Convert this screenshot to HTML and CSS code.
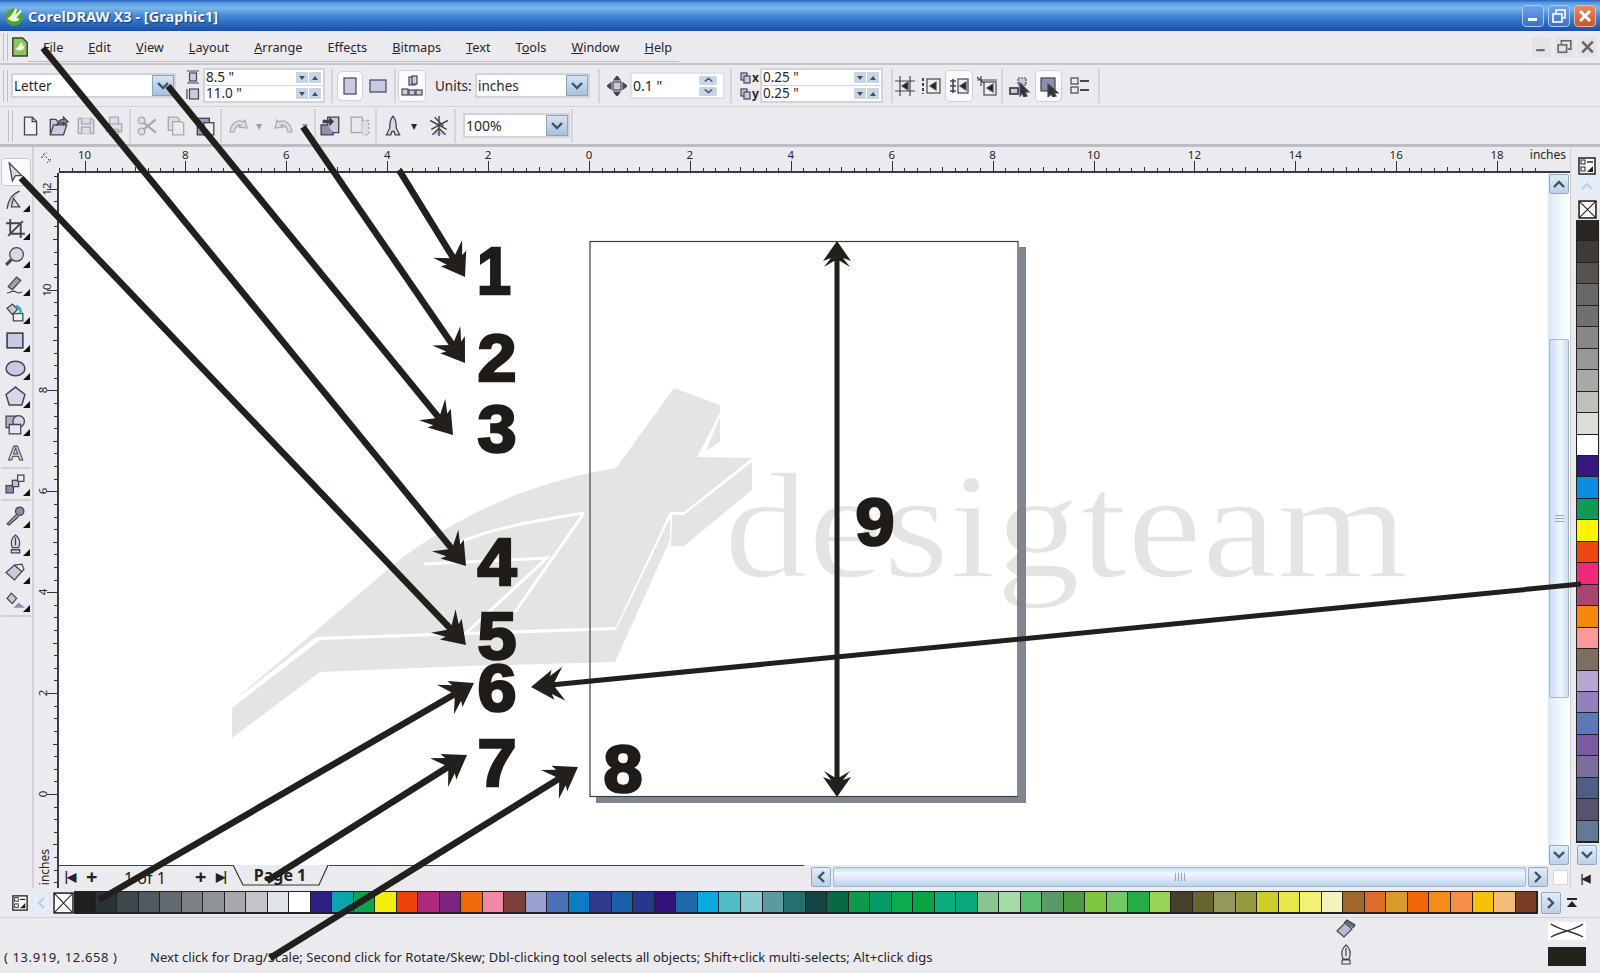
FILE: index.html
```html
<!DOCTYPE html>
<html lang="en">
<head>
    <meta charset="UTF-8">
    <title>CorelDRAW X3 - [Graphic1]</title>
    <link rel="stylesheet" href="styles.css">
</head>
<body>
<div class="app">

    <!-- Title bar -->
    <header class="titlebar">
        <svg class="app-logo" viewBox="0 0 20 20"><circle cx="10" cy="11" r="8" fill="#4fa52c"/><path d="M4 12c3-1 5-4 7-9l2 1-2 5 5-5 1 2-5 6 3 0-1 2c-3 2-7 1-10-2z" fill="#eef5dc"/></svg>
        <span class="title-text">CorelDRAW X3 - [Graphic1]</span>
        <div class="win-btns">
            <button class="win-btn"><svg viewBox="0 0 20 20"><rect x="5" y="12" width="9" height="3" fill="#fff"/></svg></button>
            <button class="win-btn"><svg viewBox="0 0 20 20" fill="none" stroke="#fff" stroke-width="1.6"><rect x="4" y="8" width="9" height="8"/><path d="M7 7V4h9v8h-3"/></svg></button>
            <button class="win-btn win-close"><svg viewBox="0 0 20 20" stroke="#fff" stroke-width="3"><path d="M5 5l10 10M15 5L5 15"/></svg></button>
        </div>
    </header>

    <!-- Menu bar -->
    <nav class="menubar">
        <span class="grip"></span>
        <svg class="doc-logo" viewBox="0 0 20 24"><path d="M2 2h11l5 5v15H2z" fill="#8fc65a" stroke="#3b3f33" stroke-width="1.6"/><path d="M5 14c3-1 4-4 6-7l2 1-1 3 3-1-1 4c-3 3-7 2-9 0z" fill="#f4f8e6"/></svg>
        <div class="menu-items">
            <a class="menu-item"><u>F</u>ile</a>
            <a class="menu-item"><u>E</u>dit</a>
            <a class="menu-item"><u>V</u>iew</a>
            <a class="menu-item"><u>L</u>ayout</a>
            <a class="menu-item"><u>A</u>rrange</a>
            <a class="menu-item">Effe<u>c</u>ts</a>
            <a class="menu-item"><u>B</u>itmaps</a>
            <a class="menu-item"><u>T</u>ext</a>
            <a class="menu-item">T<u>o</u>ols</a>
            <a class="menu-item"><u>W</u>indow</a>
            <a class="menu-item"><u>H</u>elp</a>
        </div>
        <div class="mdi-btns">
            <button class="mdi-btn"><svg viewBox="0 0 18 18"><rect x="4" y="11" width="8" height="2" fill="#666"/></svg></button>
            <button class="mdi-btn"><svg viewBox="0 0 18 18" fill="none" stroke="#666" stroke-width="1.5"><rect x="3" y="7" width="8" height="7"/><path d="M6 6V3h9v8h-3"/></svg></button>
            <button class="mdi-btn"><svg viewBox="0 0 18 18" stroke="#666" stroke-width="2.4"><path d="M4 4l10 10M14 4L4 14"/></svg></button>
        </div>
    </nav>

    <!-- Property bar -->
    <div class="propbar">
        <span class="grip"></span>
        <div class="combo combo-paper"><span>Letter</span><span class="drop"><svg viewBox="0 0 12 8"><path d="M1 1l5 5 5-5" fill="none" stroke="#3e5168" stroke-width="2.4"/></svg></span></div>
        <div class="dim-icons">
            <svg class="ic small" viewBox="0 0 14 14"><path d="M1 1h12M1 13h12"/><rect x="3.5" y="3" width="7" height="8"/></svg>
            <svg class="ic small" viewBox="0 0 14 14"><path d="M1 2v10"/><rect x="3.5" y="2" width="9" height="10"/></svg>
        </div>
        <div class="spin-pair w-size">
            <div class="spin-row"><span>8.5 "</span><i class="mini down"></i><i class="mini up"></i></div>
            <div class="spin-row"><span>11.0 "</span><i class="mini down"></i><i class="mini up"></i></div>
        </div>
        <span class="sep s-size"></span>
        <button class="tb-btn on portrait"><svg class="ic" viewBox="0 0 20 20"><rect x="4" y="2" width="12" height="16"/></svg></button>
        <button class="tb-btn landscape"><svg class="ic" viewBox="0 0 20 20"><rect x="2" y="4" width="16" height="12"/></svg></button>
        <span class="sep s-orient"></span>
        <button class="tb-btn on layoutbtn"><svg class="ic" viewBox="0 0 24 24"><rect x="9" y="3" width="6" height="8"/><rect x="12" y="2" width="5" height="8"/><rect x="2" y="15" width="6" height="6"/><rect x="9" y="16" width="6" height="5"/><rect x="16" y="16" width="6" height="5"/></svg></button>
        <span class="units-label">Units:</span>
        <div class="combo combo-units"><span>inches</span><span class="drop"><svg viewBox="0 0 12 8"><path d="M1 1l5 5 5-5" fill="none" stroke="#3e5168" stroke-width="2.4"/></svg></span></div>
        <span class="sep s-units"></span>
        <svg class="ic nudge" viewBox="0 0 20 20"><rect x="6" y="6" width="8" height="8"/><path d="M10 0l3 4H7zM10 20l3-4H7zM0 10l4-3v6zM20 10l-4-3v6z" fill="#444"/></svg>
        <div class="nudge-field"><span>0.1 "</span><div class="nudge-spin"><i><svg viewBox="0 0 12 8"><path d="M1 6l5-4 5 4" fill="none" stroke="#3e5168" stroke-width="2"/></svg></i><i><svg viewBox="0 0 12 8"><path d="M1 2l5 4 5-4" fill="none" stroke="#3e5168" stroke-width="2"/></svg></i></div></div>
        <span class="sep s-nudge"></span>
        <div class="dup-icons">
            <div class="dup-row"><svg class="ic tiny" viewBox="0 0 12 12"><rect x="1" y="1" width="6" height="7"/><rect x="4" y="4" width="6" height="7"/></svg><b>x</b></div>
            <div class="dup-row"><svg class="ic tiny" viewBox="0 0 12 12"><rect x="1" y="1" width="6" height="7"/><rect x="4" y="4" width="6" height="7"/></svg><b>y</b></div>
        </div>
        <div class="spin-pair w-dup">
            <div class="spin-row"><span>0.25 "</span><i class="mini down"></i><i class="mini up"></i></div>
            <div class="spin-row"><span>0.25 "</span><i class="mini down"></i><i class="mini up"></i></div>
        </div>
        <span class="sep s-dup"></span>
        <button class="tb-btn snap1"><svg class="ic" viewBox="0 0 22 22"><path d="M1 6h20M1 16h20M6 1v20M16 1v20"/><path d="M8 11l6-4v8z" fill="#222"/></svg></button>
        <button class="tb-btn snap2"><svg class="ic" viewBox="0 0 22 22"><path d="M3 3v16" stroke-dasharray="3 2" stroke-width="2"/><rect x="7" y="4" width="13" height="14" fill="#eee"/><path d="M10 11l6-4v8z" fill="#222"/></svg></button>
        <button class="tb-btn on snap3"><svg class="ic" viewBox="0 0 22 22"><path d="M2 6h6M2 11h6M2 16h6M5 4v14" stroke-width="1.6"/><rect x="10" y="4" width="10" height="14" fill="#eee"/><path d="M12 11l6-4v8z" fill="#222"/></svg></button>
        <button class="tb-btn snap4"><svg class="ic" viewBox="0 0 22 22"><path d="M5 1v10M1 5h20M1 2l8 7"/><rect x="8" y="7" width="12" height="13" fill="#eee"/><path d="M11 13l6-4v8z" fill="#222"/></svg></button>
        <span class="sep s-snap"></span>
        <button class="tb-btn wrap1"><svg class="ic" viewBox="0 0 22 22"><rect x="1" y="13" width="8" height="6" stroke-width="1.8"/><rect x="9" y="3" width="8" height="7" stroke-dasharray="2 1"/><path d="M11 8l9 9-4 0 2 4-3 1-2-4-2 3z" fill="#333"/></svg></button>
        <button class="tb-btn on wrap2"><svg class="ic" viewBox="0 0 22 22"><rect x="3" y="3" width="14" height="13" fill="#8d8fb0"/><path d="M10 9l10 9-4 0 2 3-3 1-2-3-3 3z" fill="#333"/></svg></button>
        <button class="tb-btn opts"><svg class="ic" viewBox="0 0 22 22"><rect x="2" y="3" width="7" height="6" fill="#eee"/><rect x="2" y="12" width="7" height="6" fill="#eee"/><path d="M11 6h9M11 15h9" stroke-width="2"/></svg></button>
        <span class="sep s-end"></span>
    </div>

    <!-- Standard toolbar -->
    <div class="stdbar">
        <span class="grip"></span>
        <button class="tb-btn std first"><svg class="ic" viewBox="0 0 20 20"><path d="M5 2h7l4 4v12H5zM12 2v4h4" fill="#f2f2f6"/></svg></button>
        <button class="tb-btn std"><svg class="ic" viewBox="0 0 20 20"><path d="M3 18V4h5l2 2h4v2M3 18l3-9h12l-3 9z"/><path d="M9 9c1-3 3-5 6-5V2l4 4-4 3V7c-2 0-4 1-6 2z" fill="#888"/></svg></button>
        <button class="tb-btn std dim"><svg class="ic" viewBox="0 0 20 20"><path d="M3 3h12l2 2v12H3z"/><path d="M6 3v5h8V3M6 17v-6h8v6"/></svg></button>
        <button class="tb-btn std dim"><svg class="ic" viewBox="0 0 20 20"><path d="M6 8V2h8v6M3 8h14v7H3zM6 13h8v5H6z"/></svg></button>
        <span class="sep"></span>
        <button class="tb-btn std m1 dim"><svg class="ic" viewBox="0 0 20 20"><circle cx="5" cy="5" r="3"/><circle cx="5" cy="15" r="3"/><path d="M7 7l11 9M7 13L18 4" stroke-width="2"/></svg></button>
        <button class="tb-btn std m1 dim"><svg class="ic" viewBox="0 0 20 20"><path d="M3 2h8l2 2v10H3z"/><path d="M7 6h8l2 2v10H7z" fill="#eee"/></svg></button>
        <button class="tb-btn std m1"><svg class="ic" viewBox="0 0 20 20"><rect x="3" y="3" width="11" height="15" fill="#9a9bc0"/><rect x="9" y="7" width="9" height="11" fill="#eee"/></svg></button>
        <span class="sep"></span>
        <button class="tb-btn std undo dim"><svg class="ic" viewBox="0 0 22 20"><path d="M2 16C3 7 10 3 15 6l2-2 2 8-8-1 2-2c-3-1-6 2-7 7z"/></svg></button>
        <span class="caret c-undo dim">&#9662;</span>
        <button class="tb-btn std redo dim"><svg class="ic" viewBox="0 0 22 20"><path d="M20 16C19 7 12 3 7 6L5 4l-2 8 8-1-2-2c3-1 6 2 7 7z"/></svg></button>
        <span class="caret c-redo dim">&#9662;</span>
        <span class="sep s-redo"></span>
        <button class="tb-btn std"><svg class="ic" viewBox="0 0 20 20"><rect x="1" y="9" width="11" height="9" fill="#8f90a8"/><path d="M7 9V2h10v14h-5"/><path d="M3 5h6V3l3 3-3 3V7H3z" fill="#333"/></svg></button>
        <button class="tb-btn std m1 dim"><svg class="ic" viewBox="0 0 20 20"><rect x="2" y="2" width="10" height="14" fill="#e6e6ee"/><path d="M12 5h6v13h-6" stroke-dasharray="2 2"/></svg></button>
        <span class="sep"></span>
        <button class="tb-btn std m2"><svg class="ic" viewBox="0 0 20 20"><path d="M10 1c3 3 3 7 3 11l3 6h-4l-1-3H9l-1 3H4l3-6c0-4 0-8 3-11z" fill="#d7d8e8"/></svg></button>
        <span class="caret c-launch">&#9662;</span>
        <button class="tb-btn std m3"><svg class="ic" viewBox="0 0 20 20" fill="none"><path d="M10 1v18M2 5l15 8M18 5L3 13M4 18l6-6 6 6M6 2l8 8" stroke-width="1.3"/></svg></button>
        <span class="sep"></span>
        <div class="combo combo-zoom"><span>100%</span><span class="drop"><svg viewBox="0 0 12 8"><path d="M1 1l5 5 5-5" fill="none" stroke="#3e5168" stroke-width="2.4"/></svg></span></div>
        <span class="sep s-zoom"></span>
    </div>

    <!-- Main work area -->
    <main class="workspace">
        <aside class="toolbox">
            <button class="tool active"><svg class="ic" viewBox="0 0 20 20"><path d="M4 1l12 12h-6l-3 5z" fill="#d8d9ea"/></svg></button>
            <button class="tool fly"><svg class="ic" viewBox="0 0 20 20" fill="none"><path d="M2 18C3 9 8 3 14 1"/><path d="M8 8l6 8H6z" fill="#ddd"/></svg></button>
            <button class="tool fly"><svg class="ic" viewBox="0 0 20 20"><path d="M5 1v14h14M1 5h14v14M3 17L17 3" fill="none" stroke-width="1.8"/></svg></button>
            <button class="tool fly"><svg class="ic" viewBox="0 0 20 20"><circle cx="11" cy="8" r="6.5" fill="#d7d8ea"/><path d="M6 13l-5 5" stroke-width="3"/></svg></button>
            <button class="tool fly"><svg class="ic" viewBox="0 0 20 20"><path d="M3 12l8-9 4 3-8 9z" fill="#9ea0ba"/><path d="M2 18c3 0 5-3 8-1s4 1 6 0" fill="none"/></svg></button>
            <button class="tool fly"><svg class="ic" viewBox="0 0 20 20"><path d="M2 6l5-4 5 5-5 5z" fill="#c7c8d8"/><rect x="8" y="11" width="9" height="7" fill="#eee"/><path d="M10 4c3 0 5 2 5 7" fill="none" stroke="#27b2bb" stroke-width="2.4"/></svg></button>
            <button class="tool fly"><svg class="ic" viewBox="0 0 20 20"><rect x="2" y="3" width="15" height="14" fill="#c9cae4" stroke-width="1.6"/></svg></button>
            <button class="tool fly"><svg class="ic" viewBox="0 0 20 20"><ellipse cx="10" cy="10" rx="9" ry="7" fill="#c9cae4" stroke-width="1.4"/></svg></button>
            <button class="tool fly"><svg class="ic" viewBox="0 0 20 20"><path d="M10 1l9 7-3 10H4L1 8z" fill="#d7d8ea" stroke-width="1.4"/></svg></button>
            <button class="tool fly"><svg class="ic" viewBox="0 0 20 20"><rect x="1" y="2" width="11" height="11" fill="#aeb0c9"/><circle cx="13" cy="7" r="5.5" fill="#d4d5e6"/><path d="M4 10l11 0 0 9H4z" fill="#e6e7f0"/></svg></button>
            <button class="tool"><svg class="ic" viewBox="0 0 22 22"><text class="tool-a" x="11" y="19" text-anchor="middle">A</text></svg></button>
            <span class="tool-sep"></span>
            <button class="tool fly"><svg class="ic" viewBox="0 0 20 20"><rect x="1" y="11" width="7" height="7" fill="#8d8ea8"/><rect x="7" y="6" width="6" height="6" fill="#c0c1d4"/><rect x="12" y="1" width="6" height="6" fill="#eee"/></svg></button>
            <span class="tool-sep"></span>
            <button class="tool fly"><svg class="ic" viewBox="0 0 20 20"><circle cx="14" cy="5" r="4" fill="#8d8ea8"/><path d="M11 8l-9 9 2 1 9-8" fill="#aaa"/></svg></button>
            <button class="tool fly"><svg class="ic" viewBox="0 0 20 20"><path d="M10 1c4 3 5 7 3 12H7C5 8 6 4 10 1zM10 3v8M6 15h8v3H6z" fill="#d7d8e8"/></svg></button>
            <button class="tool fly"><svg class="ic" viewBox="0 0 20 20"><path d="M1 10l8-7 7 6-7 8z" fill="#c9cae0"/><path d="M9 3l7-1 2 5-2 2" fill="none"/></svg></button>
            <button class="tool fly"><svg class="ic" viewBox="0 0 20 20"><path d="M2 8l4-5 5 5-4 5z" fill="#c9cae0"/><path d="M8 17l5-5 6 5z" fill="#8f90b5" stroke="none"/></svg></button>
            <span class="tool-sep"></span>
        </aside>

        <div class="ruler-corner"><svg viewBox="0 0 14 14" fill="none" stroke="#333" stroke-dasharray="2 1.5"><path d="M2 7a5 5 0 0 1 5-5M7 12l5-5M3 3l8 8"/></svg></div>
        <div class="ruler-top" id="rulerTop"><span class="ruler-unit">inches</span></div>
        <div class="ruler-left" id="rulerLeft"><span class="ruler-unit-v">inches</span></div>
        <div class="canvas"></div>

        <div class="vscroll">
            <button class="sb-btn"><svg viewBox="0 0 12 8"><path d="M1 7l5-5 5 5" fill="none" stroke="#3e5168" stroke-width="2.4"/></svg></button>
            <div class="vtrack"><div class="vthumb"><i></i><i></i><i></i></div></div>
            <button class="sb-btn"><svg viewBox="0 0 12 8"><path d="M1 1l5 5 5-5" fill="none" stroke="#3e5168" stroke-width="2.4"/></svg></button>
        </div>

        <div class="bottom-row">
            <div class="pager">
                <span class="pg-ico">|&#9664;</span>
                <span class="pg-plus">+</span>
                <span class="pg-count">1 of 1</span>
                <span class="pg-plus p2">+</span>
                <span class="pg-ico p3">&#9654;|</span>
            </div>
            <svg class="page-tab" viewBox="0 0 96 23"><path d="M0 0l10 20h76L95 0" fill="none" stroke="#333" stroke-width="1.2"/><text x="47" y="16" text-anchor="middle">Page 1</text></svg>
            <div class="tab-rest"></div>
            <div class="hscroll">
                <button class="sb-btn"><svg viewBox="0 0 8 12"><path d="M7 1L2 6l5 5" fill="none" stroke="#3e5168" stroke-width="2.4"/></svg></button>
                <div class="hthumb"><i></i><i></i><i></i><i></i></div>
                <button class="sb-btn"><svg viewBox="0 0 8 12"><path d="M1 1l5 5-5 5" fill="none" stroke="#3e5168" stroke-width="2.4"/></svg></button>
            </div>
        </div>
        <div class="sizer"><span></span></div>

        <aside class="vpalette">
            <svg class="pal-fly" viewBox="0 0 18 18"><rect x="1" y="1" width="16" height="16" fill="#fff" stroke="#222" stroke-width="1.5"/><rect x="3" y="3" width="4" height="4" fill="none" stroke="#222"/><path d="M9 5h6" stroke="#222" stroke-width="1.4"/><rect x="3" y="10" width="4" height="4" fill="none" stroke="#222"/><path d="M9 15l6-6v6z" fill="#222"/></svg>
            <button class="sb-btn pal-up"><svg viewBox="0 0 12 8"><path d="M1 7l5-5 5 5" fill="none" stroke="#bcd0e6" stroke-width="2.4"/></svg></button>
            <svg class="no-color" viewBox="0 0 18 18"><rect x="1" y="1" width="16" height="16" fill="#fff" stroke="#222" stroke-width="1.5"/><path d="M1 1l16 16M17 1L1 17" stroke="#222"/></svg>
            <div class="vswatches" id="vSwatches"></div>
            <button class="sb-btn pal-down"><svg viewBox="0 0 12 8"><path d="M1 1l5 5 5-5" fill="none" stroke="#3e5168" stroke-width="2.4"/></svg></button>
            <span class="pal-end">|&#9664;</span>
        </aside>
    </main>

    <!-- Horizontal palette -->
    <div class="hpalette">
        <svg class="hp-fly" viewBox="0 0 18 18"><rect x="1" y="1" width="16" height="16" fill="#fff" stroke="#222" stroke-width="1.5"/><rect x="3" y="3" width="4" height="4" fill="none" stroke="#222"/><path d="M9 5h6" stroke="#222" stroke-width="1.4"/><rect x="3" y="10" width="4" height="4" fill="none" stroke="#222"/><path d="M9 15l6-6v6z" fill="#222"/></svg>
        <button class="sb-btn hp-left"><svg viewBox="0 0 8 12"><path d="M7 1L2 6l5 5" fill="none" stroke="#bcd0e6" stroke-width="2.4"/></svg></button>
        <svg class="hp-none" viewBox="0 0 20 20" preserveAspectRatio="none"><rect x="1" y="1" width="18" height="18" fill="#fff" stroke="#222" stroke-width="1.4"/><path d="M1 1l18 18M19 1L1 19" stroke="#222"/></svg>
        <div class="hswatches" id="hSwatches"></div>
        <button class="sb-btn hp-right"><svg viewBox="0 0 8 12"><path d="M1 1l5 5-5 5" fill="none" stroke="#3e5168" stroke-width="2.4"/></svg></button>
        <svg class="hp-top" viewBox="0 0 12 12"><path d="M1 1h10v2H1zM6 4l5 6H1z" fill="#222"/></svg>
    </div>

    <!-- Status bar -->
    <footer class="statusbar">
        <span class="coords">( 13.919, 12.658 )</span>
        <span class="hint">Next click for Drag/Scale; Second click for Rotate/Skew; Dbl-clicking tool selects all objects; Shift+click multi-selects; Alt+click digs</span>
        <div class="fill-icons">
            <svg class="ic" viewBox="0 0 22 22"><path d="M2 13l8-8 7 6-8 8z" fill="#b9bbd6"/><path d="M9 5l3-3 8 5-2 3" fill="#6a6a74"/></svg>
            <svg class="ic" viewBox="0 0 22 22"><path d="M11 1c5 4 5 9 3 14H8C6 10 6 5 11 1zM11 4v8M7 16h8v4H7z" fill="#e4e5ee"/></svg>
        </div>
        <div class="fill-boxes">
            <svg class="fill-none" viewBox="0 0 38 18"><path d="M3 2c10 7 22 7 32 13M3 15C13 9 25 9 35 2" fill="none" stroke="#333" stroke-width="1.4"/></svg>
            <span class="fill-black"></span>
        </div>
    </footer>

    <!-- Drawing and the annotations laid over the whole window -->
    <svg class="overlay" viewBox="0 0 1600 973">
        <defs>
            <marker id="head" markerUnits="userSpaceOnUse" markerWidth="44" markerHeight="44" viewBox="-36 -22 44 44" refX="-12" refY="0" orient="auto-start-reverse">
                <polygon points="0,0 -22,-15 -20,-9 -33,-17 -24,-3 -24,3 -33,17 -20,9 -22,15" class="ink"/>
            </marker>
            <marker id="headSmall" markerUnits="userSpaceOnUse" markerWidth="36" markerHeight="36" viewBox="-30 -18 36 36" refX="-12" refY="0" orient="auto-start-reverse">
                <polygon points="0,0 -20,-14 -17,-6 -26,-13 -20,-3 -20,3 -26,13 -17,6 -20,14" class="ink"/>
            </marker>
        </defs>

        <g class="wm">
            <path d="M232 702L316 637L616 627L670 512L684 512L752 458L697 457L720 413L720 405L674 388L616 468C530 482 460 515 399 560Z"/>
            <path d="M232 708L320 640L616 630L670 518L670 540L615 662L507 665L466 666L320 672L232 738Z"/>
            <path d="M672 515L684 515L752 462L752 490L684 546L671 546Z"/>
            <path d="M720 417L720 442L706 451Z"/>
            <path class="wm-cut" d="M584 513C540 520 490 528 456 544M424 564L547 558L466 633M584 513L515 612"/>
            <text class="wm-text" x="724" y="577" textLength="684" lengthAdjust="spacingAndGlyphs">desigteam</text>
        </g>

        <path class="page-shadow" d="M1019 247H1026V803H596V797H1019Z"/>
        <rect class="page" x="590" y="241.5" width="428" height="555"/>

        <g class="arrows">
            <line x1="399" y1="170" x2="458.7" y2="266.8" marker-end="url(#head)"/>
            <line x1="303" y1="127" x2="458.2" y2="353.1" marker-end="url(#head)"/>
            <line x1="168" y1="86" x2="445.4" y2="425.7" marker-end="url(#head)"/>
            <line x1="43" y1="48" x2="458.4" y2="556.7" marker-end="url(#head)"/>
            <line x1="21" y1="178" x2="457.7" y2="636.3" marker-end="url(#head)"/>
            <line x1="99" y1="900" x2="463.6" y2="689" marker-end="url(#head)"/>
            <line class="thin" x1="1581" y1="584" x2="543" y2="685.8" marker-end="url(#head)"/>
            <line x1="267" y1="881" x2="456.8" y2="761.4" marker-end="url(#head)"/>
            <line x1="270" y1="958" x2="567.8" y2="773.3" marker-end="url(#head)"/>
            <line class="thin" x1="837" y1="253" x2="837" y2="785" marker-start="url(#headSmall)" marker-end="url(#headSmall)"/>
        </g>

        <g class="nums">
            <text x="494" y="294" textLength="34" lengthAdjust="spacingAndGlyphs">1</text>
            <text x="497" y="381" textLength="39" lengthAdjust="spacingAndGlyphs">2</text>
            <text x="497" y="452" textLength="39" lengthAdjust="spacingAndGlyphs">3</text>
            <text x="497" y="585" textLength="39" lengthAdjust="spacingAndGlyphs">4</text>
            <text x="497" y="659" textLength="39" lengthAdjust="spacingAndGlyphs">5</text>
            <text x="497" y="711" textLength="39" lengthAdjust="spacingAndGlyphs">6</text>
            <text x="497" y="786" textLength="39" lengthAdjust="spacingAndGlyphs">7</text>
            <text x="623" y="792" textLength="39" lengthAdjust="spacingAndGlyphs">8</text>
            <text x="875" y="545" textLength="39" lengthAdjust="spacingAndGlyphs">9</text>
        </g>
    </svg>
</div>
<script src="script.js"></script>
</body>
</html>
```

FILE: styles.css
```css
* {
    box-sizing: border-box;
}

body {
    margin: 0;
    background-color: #ebeaef;
    font-family: "Noto Sans", "Liberation Sans", sans-serif;
    color: #26262a;
}

button {
    padding: 0;
    border: none;
    background: none;
}

.app {
    position: relative;
    width: 1600px;
    height: 973px;
    overflow: hidden;
    background-color: #ebeaef;
    display: flex;
    flex-direction: column;
}

/* Title bar */
.titlebar {
    height: 31px;
    flex: none;
    display: flex;
    align-items: center;
    padding-left: 3px;
    background: linear-gradient(#2a5fc0 0, #5b9fe2 3px, #7ab6ec 8px, #4a8cd8 15px, #2a68c0 24px, #1b4fa6 31px);
}

.app-logo {
    width: 22px;
    height: 22px;
}

.title-text {
    margin-left: 3px;
    font-size: 14.6px;
    font-weight: 700;
    color: #f2f6fb;
    text-shadow: 1px 1px 1px #143a80;
}

.win-btns {
    margin-left: auto;
    margin-right: 4px;
    display: flex;
    gap: 4px;
}

.win-btn {
    width: 22px;
    height: 22px;
    border: 1px solid #a9c8ee;
    border-radius: 4px;
    background: linear-gradient(#6fa4e4, #3a70c6);
}

.win-close {
    border-color: #e7b7a4;
    background: linear-gradient(#e88a62, #cf5229);
}

.win-btn svg,
.mdi-btn svg {
    display: block;
    width: 100%;
    height: 100%;
}

/* Menu bar */
.menubar {
    height: 34px;
    flex: none;
    display: flex;
    align-items: center;
    border-bottom: 2px solid #c6c6ca;
    position: relative;
}

.grip {
    width: 5px;
    height: 28px;
    margin-left: 3px;
    flex: none;
    border-left: 1px solid #bdbdc3;
    border-right: 1px solid #bdbdc3;
}

.doc-logo {
    width: 18px;
    height: 22px;
    margin-left: 3px;
}

.menu-items {
    width: 651px;
    height: 30px;
    margin-left: -1px;
    padding-left: 15px;
    display: flex;
    align-items: center;
    gap: 25px;
    font-size: 12.7px;
    border-bottom: 1px solid #bdbdc3;
}

.mdi-btns {
    margin-left: auto;
    margin-right: 3px;
    display: flex;
    gap: 4px;
}

.mdi-btn {
    width: 19px;
    height: 20px;
    border-radius: 2px;
    background-color: #e4e3e8;
}

/* Property bar */
.propbar {
    height: 41px;
    flex: none;
    display: flex;
    align-items: center;
    font-size: 13.5px;
}

.propbar .grip,
.stdbar .grip {
    height: 32px;
}

.ic {
    width: 20px;
    height: 20px;
    fill: #c9cae2;
    stroke: #45454f;
    stroke-width: 1.2;
    flex: none;
}

.ic.small {
    width: 14px;
    height: 14px;
}

.ic.tiny {
    width: 12px;
    height: 12px;
}

.combo {
    height: 25px;
    display: flex;
    align-items: center;
    justify-content: space-between;
    padding-left: 1px;
    background-color: #fff;
    border: 2px solid #d3d3d8;
    flex: none;
}

.drop {
    width: 22px;
    height: 100%;
    display: flex;
    align-items: center;
    justify-content: center;
    background: linear-gradient(#d6e3f2, #a9c1de);
    border: 1px solid #8ea3bd;
}

.drop svg {
    width: 12px;
    height: 8px;
}

.combo-paper {
    width: 165px;
    margin-left: 3px;
}

.dim-icons {
    width: 14px;
    margin-left: 10px;
    display: flex;
    flex-direction: column;
    gap: 3px;
}

.spin-pair {
    height: 35px;
    margin-left: 3px;
    flex: none;
    display: flex;
    flex-direction: column;
    border: 2px solid #d3d3d8;
    background-color: #d3d3d8;
    gap: 1px;
    font-size: 13.5px;
    line-height: 15px;
}

.spin-row {
    flex: 1;
    display: flex;
    align-items: center;
    padding: 0 2px 0 1px;
    background-color: #fff;
}

.spin-row span {
    flex: 1;
}

.mini {
    width: 12px;
    height: 11px;
    margin-left: 1px;
    display: flex;
    align-items: center;
    justify-content: center;
    background-color: #c7d5e6;
}

.mini::after {
    content: "";
    border-left: 3px solid transparent;
    border-right: 3px solid transparent;
}

.mini.down::after {
    border-top: 4px solid #3e5168;
}

.mini.up::after {
    border-bottom: 4px solid #3e5168;
}

.w-size {
    width: 122px;
}

.w-dup {
    width: 123px;
    margin-left: 1px;
}

.sep {
    width: 2px;
    height: 34px;
    margin: 0 1px;
    flex: none;
    background-color: #d4d4da;
}

.tb-btn {
    height: 30px;
    display: flex;
    align-items: center;
    justify-content: center;
    flex: none;
    border-radius: 5px;
}

.tb-btn.on {
    background-color: #fbfbfd;
    border: 1px solid #cfcfd6;
}

.s-size { margin-left: 6px; }
.portrait { width: 26px; margin-left: 3px; }
.landscape { width: 20px; margin-left: 5px; }
.s-orient { margin-left: 6px; }
.layoutbtn { width: 28px; margin-left: 1px; height: 32px; }
.layoutbtn .ic { width: 24px; height: 24px; }
.units-label { width: 36px; margin-left: 9px; margin-right: 4px; flex: none; }
.combo-units { width: 115px; }
.s-units { margin-left: 8px; }
.nudge { margin-left: 6px; }
.nudge-field {
    width: 95px;
    height: 27px;
    margin-left: 3px;
    padding: 0 6px 0 1px;
    flex: none;
    display: flex;
    align-items: center;
    justify-content: space-between;
    font-size: 14px;
    background-color: #fff;
    border: 2px solid #e1e1e6;
}
.nudge-spin {
    display: flex;
    flex-direction: column;
    gap: 2px;
}
.nudge-spin i {
    width: 18px;
    height: 9px;
    display: flex;
    align-items: center;
    justify-content: center;
    background-color: #c7d5e6;
    border-radius: 2px;
}
.nudge-spin svg {
    width: 9px;
    height: 6px;
}
.s-nudge { margin-left: 5px; }
.dup-icons {
    width: 19px;
    margin-left: 7px;
    display: flex;
    flex-direction: column;
    gap: 4px;
    flex: none;
}
.dup-row {
    display: flex;
    align-items: flex-end;
    font-size: 12px;
    line-height: 12px;
}
.s-dup { margin-left: 8px; }
.snap1 { width: 22px; margin-left: 0; }
.snap2 { width: 26px; margin-left: 2px; }
.snap3 { width: 28px; margin-left: 1px; height: 32px; }
.snap4 { width: 26px; margin-left: 1px; }
.s-snap { margin-left: 1px; }
.wrap1 { width: 26px; margin-left: 3px; }
.wrap2 { width: 27px; margin-left: 2px; height: 32px; }
.opts { width: 26px; margin-left: 5px; }
.s-end { margin-left: 5px; }
.snap1 .ic, .snap2 .ic, .snap3 .ic, .snap4 .ic, .wrap1 .ic, .wrap2 .ic, .opts .ic {
    width: 22px;
    height: 22px;
}

/* Standard toolbar */
.stdbar {
    height: 41px;
    flex: none;
    display: flex;
    align-items: center;
    border-top: 1px solid #d0d0d5;
    border-bottom: 3px solid #bcbcc2;
    font-size: 14px;
}

.stdbar .grip {
    margin-left: 8px;
}

.std {
    width: 28px;
}

.std .ic {
    width: 22px;
    height: 22px;
}

.first { margin-left: 3px; }
.m1 { margin-left: 1px; }
.m2 { margin-left: 1px; }
.m3 { margin-left: 4px; }
.dim { opacity: 0.4; }
.undo { margin-left: 4px; width: 24px; }
.redo { margin-left: 5px; width: 24px; }
.caret { width: 14px; font-size: 12px; text-align: center; flex: none; }
.c-undo { margin-left: 1px; }
.c-redo { margin-left: 3px; }
.s-redo { margin-left: 2px; }
.combo-zoom { width: 107px; margin-left: 6px; }
.s-zoom { margin-left: 1px; }

/* Work area */
.workspace {
    height: 741px;
    flex: none;
    display: grid;
    grid-template-columns: 34px 25px 1fr 22px 30px;
    grid-template-rows: 26px 1fr 23px;
}

.toolbox {
    grid-row: 1 / 4;
    grid-column: 1;
    padding-top: 11px;
    display: flex;
    flex-direction: column;
    align-items: center;
    border-right: 2px solid #d2d2d8;
}

.tool {
    position: relative;
    width: 30px;
    height: 28px;
    flex: none;
    display: flex;
    align-items: center;
    justify-content: center;
}

.tool .ic {
    margin-left: -1px;
    width: 21px;
    height: 21px;
}

.tool.active {
    border: 1px solid #c8c8cf;
    border-radius: 5px;
    background-color: #fbfbfd;
}

/* small flyout mark on the tool */
.tool.fly::after {
    content: "";
    position: absolute;
    right: 1px;
    bottom: 2px;
    border-style: solid;
    border-width: 0 0 7px 7px;
    border-color: transparent transparent #111 transparent;
}

.tool-a {
    font: 700 22px "Liberation Sans", sans-serif;
    fill: #e8e8f2;
    stroke: #45454f;
    stroke-width: 1.1;
}

.tool-sep {
    width: 30px;
    height: 2px;
    flex: none;
    margin: 1px 0;
    background-color: #d2d2d8;
}

.ruler-corner {
    grid-row: 1;
    grid-column: 2;
    padding: 4px 0 0 6px;
}

.ruler-corner svg {
    width: 14px;
    height: 14px;
    display: block;
}

.ruler-top {
    grid-row: 1;
    grid-column: 3 / 5;
    position: relative;
    border-bottom: 2px solid #3c3c40;
    font-size: 11.5px;
}

.ruler-left {
    grid-row: 2 / 4;
    grid-column: 2;
    position: relative;
    border-right: 2px solid #3c3c40;
    font-size: 11.5px;
}

.tick {
    position: absolute;
    background-color: #333;
}

.ruler-top .tick {
    bottom: 0;
    width: 1px;
    height: 3px;
}

.ruler-top .tick.inch { height: 4px; }
.ruler-top .tick.major { height: 10px; }

.ruler-left .tick {
    right: 0;
    height: 1px;
    width: 3px;
}

.ruler-left .tick.inch { width: 4px; }
.ruler-left .tick.major { width: 10px; }

.ruler-num {
    position: absolute;
    line-height: 14px;
}

.ruler-top .ruler-num {
    top: 1px;
    transform: translateX(-50%);
}

.ruler-left .ruler-num {
    left: 6px;
    transform: translateY(-50%) rotate(-90deg);
}

.ruler-unit {
    position: absolute;
    top: 0;
    right: 4px;
    font-size: 12px;
    line-height: 16px;
    background-color: #ebeaef;
}

.ruler-unit-v {
    position: absolute;
    left: 3px;
    bottom: 3px;
    font-size: 12px;
    line-height: 16px;
    writing-mode: vertical-rl;
    transform: rotate(180deg);
}

.canvas {
    grid-row: 2;
    grid-column: 3;
    background-color: #fff;
}

/* Scroll bars */
.sb-btn {
    width: 20px;
    height: 20px;
    flex: none;
    display: flex;
    align-items: center;
    justify-content: center;
    border: 1px solid #93a8c2;
    border-radius: 2px;
    background: linear-gradient(#e2ecf8, #bdd0e8);
}

.sb-btn svg {
    width: 12px;
    height: 8px;
}

.hscroll .sb-btn svg,
.hp-left svg,
.hp-right svg {
    width: 8px;
    height: 12px;
}

.vscroll {
    grid-row: 2;
    grid-column: 4;
    display: flex;
    flex-direction: column;
    align-items: center;
    padding-top: 1px;
    background: linear-gradient(90deg, #dce9f8, #fff);
}

.vtrack {
    flex: 1;
    width: 100%;
    padding: 145px 1px 0;
}

.vthumb {
    height: 359px;
    display: flex;
    flex-direction: column;
    align-items: center;
    justify-content: center;
    gap: 2px;
    border: 1px solid #a6b9cf;
    border-radius: 2px;
    background: linear-gradient(90deg, #c9dcf2, #f1f7fd 60%, #c9dcf2);
}

.vthumb i {
    width: 9px;
    height: 1px;
    background-color: #9aa4b0;
}

.bottom-row {
    grid-row: 3;
    grid-column: 3 / 4;
    display: flex;
}

.pager {
    width: 174px;
    height: 100%;
    position: relative;
    border-top: 1px solid #444;
    font-size: 14px;
    color: #222;
}

.pager span {
    position: absolute;
    top: 1px;
    line-height: 20px;
}

.pg-ico { left: 4px; font-size: 12px; font-weight: 700; letter-spacing: -3px; }
.pg-plus { left: 27px; font-size: 20px; font-weight: 700; }
.pg-count { left: 65px; top: 2px !important; font-size: 16px; }
.pg-plus.p2 { left: 136px; }
.pg-ico.p3 { left: 157px; }

.page-tab {
    width: 96px;
    height: 23px;
    flex: none;
}

.page-tab text {
    font: 700 16px "Noto Sans", sans-serif;
    fill: #222;
}

.tab-rest {
    width: 475px;
    flex: none;
    border-top: 1px solid #444;
}

.hscroll {
    flex: 1;
    height: 20px;
    margin-top: 2px;
    padding-left: 7px;
    display: flex;
    gap: 2px;
}

.hthumb {
    flex: 1;
    display: flex;
    align-items: center;
    justify-content: center;
    gap: 2px;
    border: 1px solid #a6b9cf;
    border-radius: 2px;
    background: linear-gradient(#c9dcf2, #f1f7fd 30%, #bcd2ec);
}

.hthumb i {
    width: 1px;
    height: 8px;
    background-color: #9aa4b0;
}

.sizer {
    grid-row: 3;
    grid-column: 4;
    padding: 5px 0 0 5px;
}

.sizer span {
    display: block;
    width: 15px;
    height: 15px;
    background-color: #fff;
    border: 1px solid #d5d5da;
}

/* Palettes */
.vpalette {
    grid-row: 1 / 4;
    grid-column: 5;
    display: flex;
    flex-direction: column;
    align-items: flex-start;
    padding: 10px 0 0 6px;
    border-left: 1px solid #cfcfd5;
}

.pal-fly {
    width: 18px;
    height: 18px;
    margin-left: 1px;
}

.pal-up {
    margin-top: 1px;
    border-color: #dfe8f2;
    background: #e4edf8;
}

.no-color {
    width: 19px;
    height: 19px;
    margin: 4px 0 1px 1px;
}

.vswatches {
    margin-left: -1px;
    width: 23px;
    display: flex;
    flex-direction: column;
    border: 1px solid #222;
    border-top: none;
}

.vswatches span {
    height: 21.46px;
    border-bottom: 1px solid #222;
}

.pal-down {
    margin-top: 2px;
}

.pal-end {
    margin: 5px 0 0 2px;
    font-size: 11px;
    font-weight: 700;
    letter-spacing: -3px;
}

.hpalette {
    height: 29px;
    flex: none;
    display: flex;
    align-items: center;
    padding-left: 12px;
    position: relative;
}

.hp-fly {
    width: 16px;
    height: 18px;
}

.hp-left {
    width: 18px;
    height: 22px;
    margin-left: 4px;
    border-color: #dfe8f2;
    background: #e4edf8;
}

.hp-none {
    width: 21px;
    height: 22px;
    margin-left: 3px;
}

.hswatches {
    display: flex;
    height: 23px;
    border: 1px solid #222;
    border-width: 1px 1px 2px 0;
}

.hswatches span {
    width: 21.53px;
    border-right: 1px solid #222;
    flex: none;
}

.hp-right {
    width: 20px;
    height: 22px;
    margin-left: 3px;
}

.hp-top {
    width: 12px;
    height: 12px;
    margin-left: 5px;
}

.statusbar {
    flex: 1;
    display: flex;
    font-size: 13px;
    align-items: flex-end;
    padding-bottom: 7px;
    border-top: 1px solid #cfcfd5;
}

.coords {
    width: 150px;
    padding-left: 4px;
    letter-spacing: 0.6px;
    flex: none;
}

.hint {
    width: 1185px;
    letter-spacing: 0.03px;
    flex: none;
}

.fill-icons {
    width: 22px;
    margin-left: 0;
    display: flex;
    flex-direction: column;
    gap: 4px;
    flex: none;
}

.fill-icons .ic {
    width: 22px;
    height: 22px;
}

.fill-boxes {
    width: 38px;
    margin-left: 191px;
    display: flex;
    flex-direction: column;
    gap: 7px;
    flex: none;
}

.fill-none {
    width: 38px;
    height: 18px;
    background-color: #fff;
}

.fill-black {
    height: 19px;
    background-color: #25221e;
}

/* Picture on the canvas */
.overlay {
    position: absolute;
    left: 0;
    top: 0;
    width: 1600px;
    height: 973px;
    pointer-events: none;
}

.page-shadow {
    fill: #7e8790;
}

.page {
    fill: none;
    stroke: #3f3f3f;
    stroke-width: 1.2;
}

.wm path {
    fill: #e4e5e3;
}

.wm .wm-cut {
    fill: none;
    stroke: #fff;
    stroke-width: 3;
}

.wm-text {
    font: 400 150px "Liberation Serif", serif;
    fill: #e4e5e3;
    stroke: #fff;
    stroke-width: 1.4;
}

.arrows line {
    stroke: #231f1c;
    stroke-width: 6.5;
}

.arrows .thin {
    stroke-width: 5;
}

.ink {
    fill: #231f1c;
}

.nums text {
    font: 700 66px "Liberation Sans", sans-serif;
    fill: #1f1b18;
    stroke: #1f1b18;
    stroke-width: 2.6;
    text-anchor: middle;
}
```

FILE: script.js
```js
const vColors = ['#2a2624', '#3e3a38', '#56524f', '#6a6866', '#72706e', '#8a8886', '#9a9896', '#aaa8a6', '#c0bfbb', '#dcdcd8', '#ffffff',
    '#361780', '#0a8fe0', '#0f9a55', '#fff500', '#ef4510', '#f0297a', '#a9466f', '#f5870a', '#f99a98', '#7c6f62',
    '#b6a7d2', '#9280bd', '#5d78b8', '#7a5ba3', '#7b6f99', '#4d5f85', '#55536e', '#637a94'];

const hColors = ['#1f2022', '#2b3235', '#3e474b', '#50595d', '#646b70', '#7b8085', '#8f9396', '#a6a8ab', '#c2c4c7', '#e2e5e8', '#ffffff',
    '#2e1f84', '#0ba5ae', '#0da44f', '#f1ef0e', '#ee4209', '#ad2a78', '#7b2482', '#f0690a', '#f088a6', '#7a4039', '#98a0d2', '#4a71b8',
    '#0d7cc6', '#2e3a8a', '#1a5fa8', '#26388a', '#33127c', '#1f68a8', '#0aaae2', '#52bcc5', '#88cace', '#5a9c9e', '#24706f', '#134446',
    '#086a45', '#0e9a4a', '#079a66', '#0bab50', '#08a542', '#0bad7e', '#08a87c', '#87c78f', '#a6dba8', '#5cbc70', '#5a9a68', '#4b9b44',
    '#7fc63e', '#74c765', '#26ac45', '#97d456', '#453f2c', '#65672f', '#95985d', '#939b3e', '#cdce2a', '#e9e84a', '#f1f174', '#f4f3bd',
    '#a0682c', '#de6b29', '#d89a2e', '#f2650a', '#f58c1a', '#f68e49', '#f6c208', '#f3bc7a', '#7c3d27'];

function fillSwatches(id, colors) {
    const box = document.getElementById(id);
    colors.forEach(color => {
        const swatch = document.createElement('span');
        swatch.style.backgroundColor = color;
        box.appendChild(swatch);
    });
}

fillSwatches('vSwatches', vColors);
fillSwatches('hSwatches', hColors);

// Rulers: one inch is 50.45px, a tick every quarter inch
const INCH = 50.45;

function addTick(ruler, prop, pos, quarter) {
    const tick = document.createElement('span');
    tick.className = 'tick';
    if (quarter % 8 === 0) {
        tick.className += ' major';
    } else if (quarter % 4 === 0) {
        tick.className += ' inch';
    }
    tick.style[prop] = pos + 'px';
    ruler.appendChild(tick);
}

function addNumber(ruler, prop, pos, value) {
    const num = document.createElement('span');
    num.className = 'ruler-num';
    num.textContent = value;
    num.style[prop] = pos + 'px';
    ruler.appendChild(num);
}

const rulerTop = document.getElementById('rulerTop');
const zeroX = 589 - 59;
for (let q = -42; q <= 75; q++) {
    const x = zeroX + q * INCH / 4;
    addTick(rulerTop, 'left', x, q);
    if (q % 8 === 0 && q <= 72) {
        addNumber(rulerTop, 'left', x, Math.abs(q / 4));
    }
}

const rulerLeft = document.getElementById('rulerLeft');
const zeroY = 794 - 173;
for (let q = -50; q <= 7; q++) {
    const y = zeroY + q * INCH / 4;
    if (y < 0) continue;
    addTick(rulerLeft, 'top', y, q);
    if (q % 8 === 0 && q <= 0) {
        addNumber(rulerLeft, 'top', y, Math.abs(q / 4));
    }
}
```
